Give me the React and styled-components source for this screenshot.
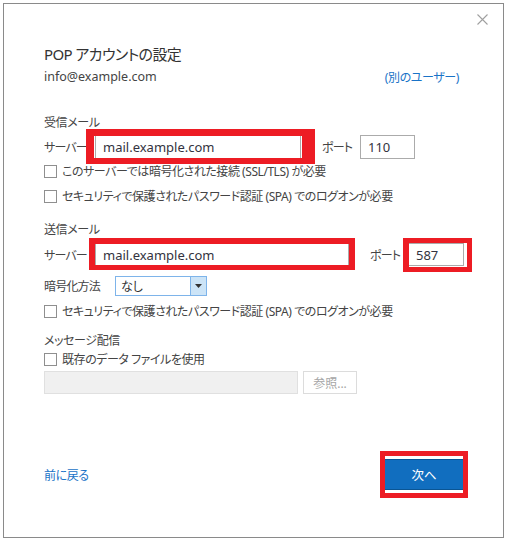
import React from "react";
import styled, { createGlobalStyle } from "styled-components";

const Global = createGlobalStyle`
  html, body { margin: 0; padding: 0; background: #ffffff; }
  body {
    font-family: "Noto Sans", "Noto Sans CJK JP", sans-serif;
    font-feature-settings: "palt";
    color: #444444;
  }
`;

const Page = styled.div`
  width: 506px;
  height: 538px;
  box-sizing: border-box;
  padding: 3px 2px 0 3px;
  background: #ffffff;
`;

const Dialog = styled.div`
  position: relative;
  width: 501px;
  height: 535px;
  box-sizing: border-box;
  border: 1px solid #8a8a8a;
  background: #ffffff;
  display: flex;
  flex-direction: column;
  padding: 40px 40px 0 40px;
`;

const Close = styled.button`
  position: absolute;
  top: 10px;
  right: 15px;
  width: 11px;
  height: 11px;
  padding: 0;
  border: 0;
  background: transparent;
  display: flex;
`;

const Title = styled.h1`
  margin: 0;
  height: 20px;
  line-height: 20px;
  font-size: 15px;
  letter-spacing: -0.6px;
  font-weight: 400;
  color: #333333;
`;

const EmailRow = styled.div`
  margin-top: 2px;
  height: 20px;
  display: flex;
  align-items: center;
  justify-content: space-between;
`;

const Email = styled.span`
  font-size: 12.5px;
  color: #444444;
`;

const Link = styled.a`
  font-size: 12px;
  letter-spacing: -0.4px;
  color: #1a73c7;
  text-decoration: none;
  margin-right: ${(p) => p.$mr || 0}px;
  margin-top: ${(p) => p.$mt || 0}px;
`;

const SectionLabel = styled.div`
  margin-top: ${(p) => p.$mt}px;
  height: 16px;
  line-height: 16px;
  font-size: 12px;
  letter-spacing: -0.4px;
  color: #444444;
`;

const Row = styled.div`
  margin-top: ${(p) => p.$mt}px;
  height: ${(p) => p.$h}px;
  display: flex;
  align-items: center;
`;

const FieldLabel = styled.span`
  width: ${(p) => p.$w}px;
  flex: none;
  font-size: 12px;
  letter-spacing: -0.8px;
  color: #444444;
  margin-left: ${(p) => p.$ml || 0}px;
`;

const TextBox = styled.div`
  position: relative;
  flex: none;
  width: ${(p) => p.$w}px;
  height: 100%;
  box-sizing: border-box;
  border: 1px solid #ababab;
  background: #ffffff;
  padding-left: 7px;
  display: flex;
  align-items: center;
  font-size: 13px;
  color: #333340;
`;

const Highlight = styled.span`
  position: absolute;
  top: ${(p) => p.$t}px;
  left: ${(p) => p.$l}px;
  right: ${(p) => p.$r}px;
  bottom: ${(p) => p.$b}px;
  border-style: solid;
  border-color: #ed1c24;
  border-width: ${(p) => p.$bw};
  pointer-events: none;
`;

const CheckRow = styled.label`
  margin-top: ${(p) => p.$mt}px;
  height: 16px;
  display: flex;
  align-items: center;
  gap: 5px;
  font-size: 12px;
  letter-spacing: -0.45px;
  color: #444444;
`;

const Box = styled.span`
  width: 13px;
  height: 13px;
  box-sizing: border-box;
  border: 1px solid #8f8f8f;
  background: #ffffff;
  flex: none;
`;

const Select = styled.div`
  width: 92px;
  height: 100%;
  box-sizing: border-box;
  border: 1px solid #7eb4ea;
  display: flex;
  font-size: 12px;
  color: #333333;
`;

const SelectValue = styled.span`
  flex: 1;
  padding-left: 5px;
  display: flex;
  align-items: center;
`;

const SelectArrow = styled.span`
  width: 15px;
  background: #cce4f7;
  border-left: 1px solid #7eb4ea;
  display: flex;
  align-items: center;
  justify-content: center;
`;

const DisabledBox = styled.div`
  width: 254px;
  height: 100%;
  box-sizing: border-box;
  border: 1px solid #e0e0e0;
  background: #f0f0f0;
`;

const BrowseButton = styled.button`
  margin-left: 5px;
  width: 54px;
  height: 100%;
  box-sizing: border-box;
  border: 1px solid #dcdcdc;
  background: #ffffff;
  font-family: inherit;
  font-size: 12px;
  color: #a6a6a6;
  padding: 0;
`;

const Footer = styled.div`
  margin-top: 65px;
  height: 31px;
  display: flex;
  align-items: center;
  justify-content: space-between;
`;

const NextButton = styled.button`
  position: relative;
  width: 78px;
  height: 31px;
  box-sizing: border-box;
  border: 0;
  border-top: 1px solid #0a5594;
  border-bottom: 1px solid #0a5594;
  background: #116ebf;
  color: #ffffff;
  font-family: inherit;
  font-size: 12.5px;
  padding: 0;
`;

export default function App() {
  return (
    <>
      <Global />
      <Page>
        <Dialog>
          <Close aria-label="close">
            <svg width="11" height="11" viewBox="0 0 11 11">
              <path d="M0.5 0.5 L10.5 10.5 M10.5 0.5 L0.5 10.5" stroke="#a0a0a0" strokeWidth="1.1" fill="none" />
            </svg>
          </Close>
          <Title>POP アカウントの設定</Title>
          <EmailRow>
            <Email>info@example.com</Email>
            <Link href="#" $mr={4} $mt={2}>(別のユーザー)</Link>
          </EmailRow>

          <SectionLabel $mt={29}>受信メール</SectionLabel>
          <Row $mt={4} $h={24}>
            <FieldLabel $w={51}>サーバー</FieldLabel>
            <TextBox $w={206}>
              mail.example.com
              <Highlight $t={-7} $l={-10} $r={-15} $b={-6} $bw="7px 13px 6px 8px" />
            </TextBox>
            <FieldLabel $w={38} $ml={21}>ポート</FieldLabel>
            <TextBox $w={55}>110</TextBox>
          </Row>
          <CheckRow $mt={4}>
            <Box />
            このサーバーでは暗号化された接続 (SSL/TLS) が必要
          </CheckRow>
          <CheckRow $mt={9}>
            <Box />
            セキュリティで保護されたパスワード認証 (SPA) でのログオンが必要
          </CheckRow>

          <SectionLabel $mt={18}>送信メール</SectionLabel>
          <Row $mt={5} $h={23}>
            <FieldLabel $w={51}>サーバー</FieldLabel>
            <TextBox $w={254}>
              mail.example.com
              <Highlight $t={-6} $l={-7} $r={-7} $b={-5} $bw="6px 6px 5px 6px" />
            </TextBox>
            <FieldLabel $w={38} $ml={21}>ポート</FieldLabel>
            <TextBox $w={56}>
              587
              <Highlight $t={-6} $l={-6} $r={-9} $b={-7} $bw="5px 5px 5px 6px" />
            </TextBox>
          </Row>
          <Row $mt={10} $h={20}>
            <FieldLabel $w={71}>暗号化方法</FieldLabel>
            <Select>
              <SelectValue>なし</SelectValue>
              <SelectArrow>
                <svg width="7" height="4" viewBox="0 0 7 4">
                  <path d="M0 0 H7 L3.5 4 Z" fill="#333333" />
                </svg>
              </SelectArrow>
            </Select>
          </Row>
          <CheckRow $mt={7}>
            <Box />
            セキュリティで保護されたパスワード認証 (SPA) でのログオンが必要
          </CheckRow>

          <SectionLabel $mt={14}>メッセージ配信</SectionLabel>
          <CheckRow $mt={2}>
            <Box />
            既存のデータ ファイルを使用
          </CheckRow>
          <Row $mt={4} $h={23}>
            <DisabledBox />
            <BrowseButton disabled>参照...</BrowseButton>
          </Row>

          <Footer>
            <Link href="#">前に戻る</Link>
            <NextButton>
              次へ
              <Highlight $t={-9} $l={-5} $r={-5} $b={-9} $bw="5px" />
            </NextButton>
          </Footer>
        </Dialog>
      </Page>
    </>
  );
}
